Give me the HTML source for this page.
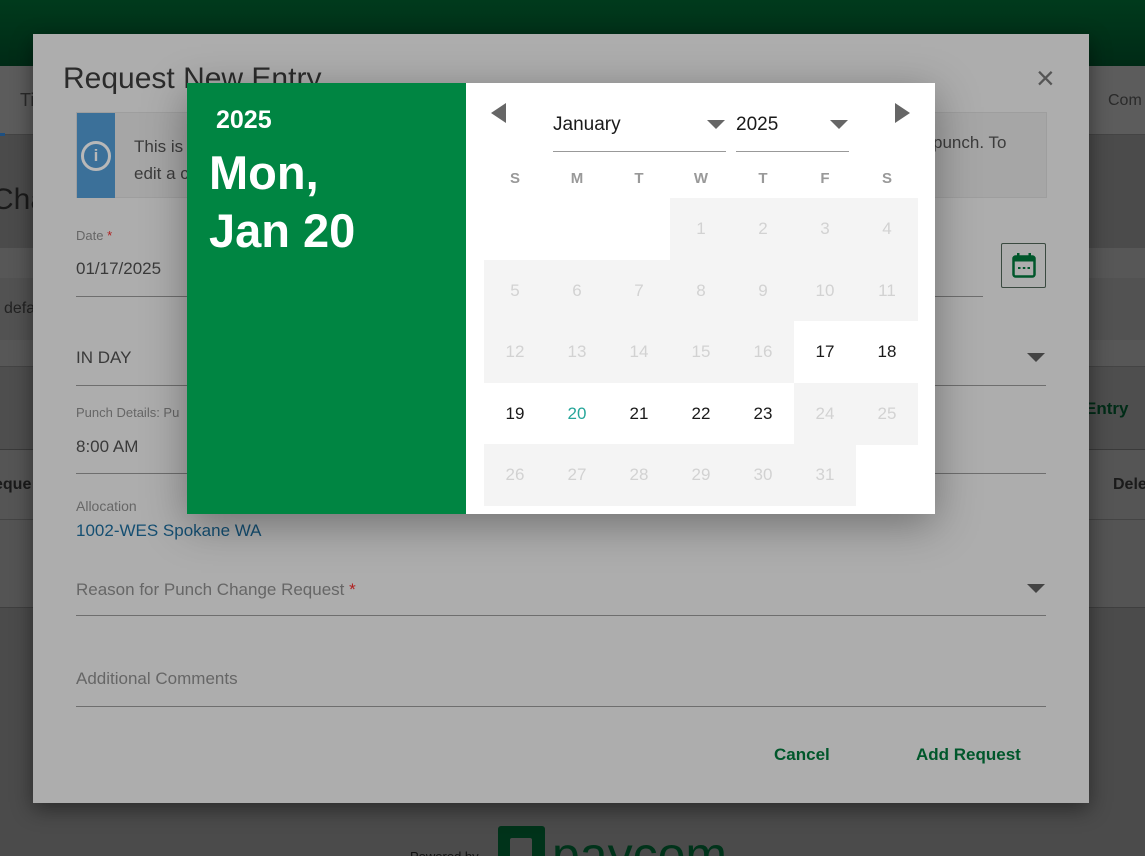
<!DOCTYPE html>
<html style="width:1145px;height:856px;overflow:hidden"><head><meta charset="utf-8">
<style>
*{margin:0;padding:0;box-sizing:border-box}
body{width:1145px;height:856px;overflow:hidden;position:relative;background:#4b4b4b;font-family:"Liberation Sans",Roboto,sans-serif}
.abs{position:absolute}
.t{position:absolute;white-space:nowrap}
</style></head><body>
<div class="abs" style="left:0;top:0;width:1145px;height:66px;background:linear-gradient(#003a1c,#002a16)"></div>
<div class="abs" style="left:0;top:66px;width:1145px;height:69px;background:#5c5c5c;border-bottom:1px solid #444"></div>
<div class="abs" style="left:0;top:133px;width:5px;height:3px;background:#1d4f80"></div>
<div class="abs" style="left:0;top:248px;width:1145px;height:30px;background:#575757"></div>
<div class="abs" style="left:0;top:278px;width:1145px;height:62px;background:#525252"></div>
<div class="abs" style="left:0;top:340px;width:1145px;height:26px;background:#575757"></div>
<div class="abs" style="left:0;top:366px;width:1145px;height:84px;background:#4e4e4e;border-top:1px solid #444;border-bottom:1px solid #3a3a3a"></div>
<div class="abs" style="left:0;top:450px;width:1145px;height:70px;background:#555;border-bottom:1px solid #444"></div>
<div class="abs" style="left:0;top:520px;width:1145px;height:88px;background:#545454;border-bottom:1px solid #3f3f3f"></div>
<div class="t" style="left:20px;top:90px;font-size:18px;color:#2a2a2a">Ti</div>
<div class="t" style="left:-8px;top:183px;font-size:30px;color:#1a1a1a">Cha</div>
<div class="t" style="left:4px;top:300px;font-size:16px;color:#222">defa</div>
<div class="t" style="left:-6px;top:476px;font-size:16px;font-weight:bold;color:#1a1a1a">eque</div>
<div class="t" style="left:1108px;top:92px;font-size:16px;color:#2a2a2a">Com</div>
<div class="t" style="left:1085px;top:399px;font-size:17px;font-weight:bold;color:#002c17">Entry</div>
<div class="t" style="left:1113px;top:476px;font-size:16px;font-weight:bold;color:#1a1a1a">Dele</div>
<div class="t" style="left:410px;top:849px;font-size:13px;color:#111">Powered by</div>
<div class="abs" style="left:498px;top:826px;width:47px;height:40px;background:#00331a;border-radius:3px"></div>
<div class="abs" style="left:510px;top:838px;width:22px;height:30px;background:#4b4b4b;border-radius:2px"></div>
<div class="t" style="left:552px;top:830px;font-size:50px;color:#00331a;line-height:1">paycom</div>

<div class="abs" style="left:33px;top:34px;width:1056px;height:769px;background:#adadad;box-shadow:0 6px 20px rgba(0,0,0,.45)"></div>
<div class="t" style="left:63px;top:62px;font-size:30px;color:#2b2b2b">Request New Entry</div>
<div class="t" style="left:1036px;top:62px;font-size:32px;color:#555;line-height:1">×</div>
<div class="abs" style="left:76px;top:112px;width:971px;height:86px;background:#a6a6a6;border:1px solid #9e9e9e"></div>
<div class="abs" style="left:77px;top:113px;width:38px;height:85px;background:#3b7099"></div>
<div class="abs" style="left:81px;top:141px;width:30px;height:30px;border:3px solid #b8b8b8;border-radius:50%;color:#b8b8b8;font:bold 17px 'Liberation Sans';text-align:center;line-height:24px">i</div>
<div class="t" style="left:134px;top:133px;font-size:17px;color:#3c3c3c;line-height:27px">This is<br>edit a c</div>
<div class="t" style="left:933px;top:133px;font-size:17px;color:#3c3c3c">punch. To</div>
<div class="t" style="left:76px;top:228px;font-size:13px;color:#666">Date <span style="color:#b02020">*</span></div>
<div class="t" style="left:76px;top:259px;font-size:17px;color:#3a3a3a">01/17/2025</div>
<div class="abs" style="left:76px;top:296px;width:907px;height:1px;background:#6e6e6e"></div>
<div class="abs" style="left:1001px;top:243px;width:45px;height:45px;border:1px solid #3a4a40;border-radius:2px"></div>
<svg class="abs" style="left:1012px;top:253px" width="24" height="26" viewBox="0 0 24 26"><rect x="1.5" y="3.5" width="21" height="20" rx="2" fill="none" stroke="#00572b" stroke-width="2.5"/><rect x="1.5" y="3.5" width="21" height="5" fill="#00572b"/><rect x="5" y="0" width="2.5" height="5" fill="#00572b"/><rect x="16.5" y="0" width="2.5" height="5" fill="#00572b"/><rect x="6" y="14" width="2.5" height="2" fill="#00572b"/><rect x="10.8" y="14" width="2.5" height="2" fill="#00572b"/><rect x="15.5" y="14" width="2.5" height="2" fill="#00572b"/></svg>
<div class="t" style="left:76px;top:348px;font-size:17px;color:#3a3a3a">IN DAY</div>
<div class="abs" style="left:1027px;top:353px;border-left:9px solid transparent;border-right:9px solid transparent;border-top:9px solid #444"></div>
<div class="abs" style="left:76px;top:385px;width:970px;height:1px;background:#6e6e6e"></div>
<div class="t" style="left:76px;top:405px;font-size:13px;color:#666">Punch Details: Pu</div>
<div class="t" style="left:76px;top:437px;font-size:17px;color:#3a3a3a">8:00 AM</div>
<div class="abs" style="left:76px;top:473px;width:970px;height:1px;background:#6e6e6e"></div>
<div class="t" style="left:76px;top:498px;font-size:14px;color:#666">Allocation</div>
<div class="t" style="left:76px;top:521px;font-size:17px;color:#154f72">1002-WES Spokane WA</div>
<div class="t" style="left:76px;top:580px;font-size:17px;color:#666">Reason for Punch Change Request <span style="color:#b02020">*</span></div>
<div class="abs" style="left:1027px;top:584px;border-left:9px solid transparent;border-right:9px solid transparent;border-top:9px solid #444"></div>
<div class="abs" style="left:76px;top:615px;width:970px;height:1px;background:#6e6e6e"></div>
<div class="t" style="left:76px;top:669px;font-size:17px;color:#666">Additional Comments</div>
<div class="abs" style="left:76px;top:706px;width:970px;height:1px;background:#6e6e6e"></div>
<div class="t" style="left:774px;top:745px;font-size:17px;font-weight:bold;color:#00572b">Cancel</div>
<div class="t" style="left:916px;top:745px;font-size:17px;font-weight:bold;color:#00572b">Add Request</div>

<div class="abs" style="left:187px;top:83px;width:748px;height:431px;background:#fff;box-shadow:0 10px 40px rgba(0,0,0,.35)"></div>
<div class="abs" style="left:187px;top:83px;width:279px;height:431px;background:#008542"></div>
<div class="t" style="left:216px;top:106px;font-size:25px;font-weight:bold;color:#fff">2025</div>
<div class="t" style="left:209px;top:144px;font-size:47px;font-weight:bold;color:#fff;line-height:58px">Mon,<br>Jan 20</div>
<div class="abs" style="left:491px;top:103px;border-top:10px solid transparent;border-bottom:10px solid transparent;border-right:15px solid #666"></div>
<div class="abs" style="left:895px;top:103px;border-top:10px solid transparent;border-bottom:10px solid transparent;border-left:15px solid #666"></div>
<div class="t" style="left:553px;top:114px;font-size:19px;color:#1a1a1a">January</div>
<div class="abs" style="left:707px;top:120px;border-left:9px solid transparent;border-right:9px solid transparent;border-top:9px solid #666"></div>
<div class="abs" style="left:553px;top:151px;width:173px;height:1px;background:#999"></div>
<div class="t" style="left:736px;top:114px;font-size:19px;color:#1a1a1a">2025</div>
<div class="abs" style="left:830px;top:120px;border-left:9px solid transparent;border-right:9px solid transparent;border-top:9px solid #666"></div>
<div class="abs" style="left:736px;top:151px;width:113px;height:1px;background:#999"></div>
<div id="cal"></div>
<script>
(function(){
var h='',days='SMTWTFS';
for(var i=0;i<7;i++)h+='<div class="t" style="left:'+(484+i*62)+'px;top:170px;width:62px;text-align:center;font-size:15px;font-weight:bold;color:#999">'+days[i]+'</div>';
var rows=[198,259.5,321,382.5,444,505.5];
for(var d=1;d<=31;d++){
 var idx=d+2,r=Math.floor(idx/7),c=idx%7;
 var en=(d>=17&&d<=23);
 var col=en?(d==20?'#26a69a':'#1a1a1a'):'#d2d2d2';
 var bg=en?'#fff':'#f4f4f4';
 h+='<div class="abs" style="left:'+(484+c*62)+'px;top:'+rows[r]+'px;width:62px;height:'+(rows[r+1]-rows[r]+0.5)+'px;background:'+bg+';color:'+col+';font-size:17px;text-align:center;line-height:61px">'+d+'</div>';
}
document.getElementById('cal').outerHTML=h;
})();
</script>
</body></html>
